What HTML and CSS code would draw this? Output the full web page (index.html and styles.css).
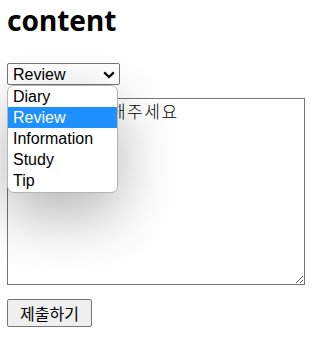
FILE: index.html
```html
<!DOCTYPE html>
<html lang="ko">
<head>
    <meta charset="UTF-8">
    <meta name="viewport" content="width=device-width, initial-scale=1.0">
    <title>Write</title>
    <link rel="stylesheet" href="styles.css">
</head>
<body>

    <h2 class="page-title">content</h2>

    <form class="post-form">
        <div class="category-field">
            <select class="category-select" name="category">
                <option>Diary</option>
                <option selected>Review</option>
                <option>Information</option>
                <option>Study</option>
                <option>Tip</option>
            </select>
            <svg class="category-arrow" width="12" height="8" viewBox="0 0 12 8">
                <path d="M1.2 1.4 L6 6 L10.8 1.4" fill="none" stroke="#000" stroke-width="2.2"/>
            </svg>

            <!-- opened list of the select -->
            <ul class="category-menu">
                <li class="category-option">Diary</li>
                <li class="category-option selected">Review</li>
                <li class="category-option">Information</li>
                <li class="category-option">Study</li>
                <li class="category-option">Tip</li>
            </ul>
        </div>

        <textarea class="post-content" name="content">내용을 입력해주세요</textarea>

        <button type="submit" class="submit-button">제출하기</button>
    </form>

</body>
</html>
```

FILE: styles.css
```css
body {
    margin: 0;
    padding: 1px 7px;
    background-color: #fff;
    color: #000;
    font-family: 'Liberation Sans', Arial, sans-serif;
}

.page-title {
    margin: 0 0 24px 0;
    font-family: 'Noto Sans', sans-serif;
    font-size: 28px;
    font-weight: 700;
    line-height: 38px;
}

.post-form {
    display: flex;
    flex-direction: column;
    align-items: flex-start;
}

.category-field {
    position: relative;
    margin-bottom: 13px;
}

.category-select {
    display: block;
    width: 113px;
    height: 22px;
    margin: 0;
    padding: 0 0 0 5px;
    border: 1px solid #767676;
    border-radius: 2px;
    background-color: #fff;
    color: #000;
    font-family: 'Liberation Sans', Arial, sans-serif;
    font-size: 16px;
    -webkit-appearance: none;
    appearance: none;
}

.category-arrow {
    position: absolute;
    top: 8px;
    left: 96px;
    pointer-events: none;
}

.category-menu {
    position: absolute;
    top: 22px;
    left: 0;
    z-index: 10;
    width: 111px;
    margin: 0;
    padding: 0 0 1px 0;
    list-style: none;
    background-color: #fff;
    border: 1px solid #b4b4b4;
    border-radius: 7px;
    box-shadow: 0 22px 60px rgba(0, 0, 0, 0.3);
    box-sizing: border-box;
    overflow: hidden;
}

.category-option {
    height: 21px;
    padding-left: 5px;
    font-size: 16px;
    line-height: 21px;
    white-space: nowrap;
}

.category-option.selected {
    background-color: #1e90ff;
    color: #fff;
}

.post-content {
    display: block;
    width: 298px;
    height: 187px;
    margin: 0 0 14px 0;
    padding: 2px;
    border: 1px solid #767676;
    border-radius: 0;
    box-sizing: border-box;
    font-family: 'Noto Sans CJK KR', sans-serif;
    font-size: 17px;
    font-weight: 300;
    line-height: 20px;
    letter-spacing: 1.5px;
    word-spacing: 8px;
    color: #000;
}

.submit-button {
    height: 28px;
    margin: 0;
    padding: 0 12px;
    border: 1px solid #767676;
    border-radius: 2px;
    background-color: #efefef;
    color: #000;
    font-family: 'Noto Sans CJK KR', sans-serif;
    font-size: 16px;
    line-height: 26px;
}
```
